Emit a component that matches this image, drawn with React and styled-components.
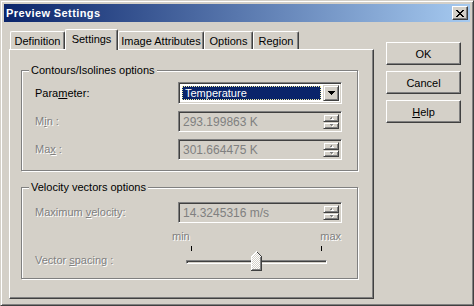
import React from 'react';
import styled, { createGlobalStyle } from 'styled-components';

const face = '#d4d0c8';
const shadow = '#808080';
const dark = '#404040';

const GlobalStyle = createGlobalStyle`
  html, body {
    margin: 0;
    padding: 0;
    background: ${face};
  }
  body {
    font-family: "Liberation Sans", Arial, sans-serif;
    font-size: 11px;
  }
  * {
    box-sizing: border-box;
  }
`;

const Window = styled.div`
  width: 474px;
  height: 306px;
  display: flex;
  flex-direction: column;
  padding: 3px;
  background: ${face};
  border: 1px solid;
  border-color: ${face} ${dark} ${dark} ${face};
  box-shadow: inset 1px 1px #fff, inset -1px -1px ${shadow};
`;

const TitleBar = styled.div`
  height: 18px;
  display: flex;
  align-items: center;
  justify-content: space-between;
  padding: 0 2px 0 2px;
  background: linear-gradient(to right, #0a246a, #a6caf0);
`;

const Title = styled.span`
  color: #fff;
  font-weight: bold;
  font-size: 11px;
  letter-spacing: 0.4px;
`;

const CloseButton = styled.div`
  width: 16px;
  height: 14px;
  display: flex;
  align-items: center;
  justify-content: center;
  background: ${face};
  border: 1px solid;
  border-color: #fff ${dark} ${dark} #fff;
  box-shadow: inset -1px -1px ${shadow};
`;

const Body = styled.div`
  flex: 1;
  display: flex;
  gap: 12px;
  padding: 7px 9px 3px 5px;
`;

const TabsColumn = styled.div`
  width: 365px;
  display: flex;
  flex-direction: column;
`;

const TabStrip = styled.div`
  height: 20px;
  display: flex;
  align-items: flex-end;
  padding-left: 1px;
`;

const Tab = styled.div`
  position: relative;
  width: ${(p) => p.$w}px;
  height: ${(p) => (p.$active ? 21 : 18)}px;
  margin-bottom: ${(p) => (p.$active ? -1 : 0)}px;
  z-index: ${(p) => (p.$active ? 1 : 0)};
  display: flex;
  align-items: center;
  justify-content: center;
  padding-bottom: ${(p) => (p.$active ? 2 : 0)}px;
  color: #000;
  background: ${face};
  border-top: 1px solid #fff;
  border-left: 1px solid #fff;
  border-right: 1px solid ${dark};
  border-radius: 2px 2px 0 0;
  box-shadow: inset -1px 0 ${shadow};
`;

const Panel = styled.div`
  flex: 1;
  display: flex;
  flex-direction: column;
  gap: 16px;
  padding: 20px 0 0 11px;
  border: 1px solid;
  border-color: #fff ${dark} ${dark} #fff;
  box-shadow: inset -1px -1px ${shadow};
`;

const GroupBox = styled.div`
  position: relative;
  width: 337px;
  height: ${(p) => p.$h}px;
  border: 1px solid ${shadow};
  box-shadow: inset 1px 1px #fff, 1px 1px #fff;
`;

const Legend = styled.span`
  position: absolute;
  top: -7px;
  left: 7px;
  padding: 0 2px;
  line-height: 13px;
  background: ${face};
  color: #000;
`;

const FormGrid = styled.div`
  display: grid;
  grid-template-columns: 1fr 164px;
  align-items: center;
  row-gap: 7px;
  padding: ${(p) => p.$top}px 15px 0 13px;
`;

const Label = styled.span`
  line-height: 13px;
  color: ${(p) => (p.$disabled ? shadow : '#000')};
  text-shadow: ${(p) => (p.$disabled ? '1px 1px #fff' : 'none')};
  align-self: ${(p) => p.$align || 'center'};
  margin-bottom: ${(p) => p.$mb || 0}px;
`;

const Key = styled.span`
  text-decoration: underline;
  text-underline-offset: 1px;
`;

const Sunken = styled.div`
  height: ${(p) => p.$h || 21}px;
  display: flex;
  align-items: center;
  background: ${(p) => (p.$white ? '#fff' : face)};
  border: 1px solid;
  border-color: ${shadow} #fff #fff ${shadow};
  box-shadow: inset 1px 1px ${dark}, inset -1px -1px ${face};
  padding: 2px 2px 2px 2px;
`;

const Selection = styled.div`
  flex: 1;
  align-self: stretch;
  margin: 1px 2px 1px 1px;
  padding-left: 2px;
  display: flex;
  align-items: center;
  background: #0a246a;
  color: #fff;
  border: 1px dotted #f4eea0;
`;

const ArrowButton = styled.div`
  width: 16px;
  align-self: stretch;
  display: flex;
  align-items: center;
  justify-content: center;
  background: ${face};
  border: 1px solid;
  border-color: ${face} ${dark} ${dark} ${face};
  box-shadow: inset 1px 1px #fff, inset -1px -1px ${shadow};
`;

const FieldText = styled.span`
  flex: 1;
  padding-left: 2px;
  color: ${shadow};
  font-size: 12px;
`;

const Spinner = styled.div`
  width: 16px;
  align-self: stretch;
  display: flex;
  flex-direction: column;
`;

const SpinHalf = styled.div`
  flex: 1;
  display: flex;
  align-items: center;
  justify-content: center;
  background: ${face};
  border: 1px solid;
  border-color: ${face} ${dark} ${dark} ${face};
  box-shadow: inset 1px 1px #fff, inset -1px -1px ${shadow};
`;

const Slider = styled.div`
  position: relative;
  width: 170px;
  margin-left: -6px;
  display: flex;
  flex-direction: column;
`;

const EndLabels = styled.div`
  display: flex;
  justify-content: space-between;
  padding-right: 1px;
  line-height: 13px;
  color: ${shadow};
  text-shadow: 1px 1px #fff;
`;

const Ticks = styled.div`
  display: flex;
  justify-content: space-between;
  margin-top: 3px;
  padding: 0 20px 0 19px;
`;

const Tick = styled.span`
  width: 1px;
  height: 5px;
  background: #000;
`;

const Track = styled.div`
  height: 4px;
  margin: 9px 15px 0 14px;
  border: 1px solid;
  border-color: ${shadow} #fff #fff ${shadow};
  box-shadow: inset 1px 1px ${dark};
  background: ${face};
`;

const Thumb = styled.svg`
  position: absolute;
  top: 21px;
`;

const ButtonColumn = styled.div`
  display: flex;
  flex-direction: column;
  gap: 6px;
  margin-top: 13px;
`;

const Button = styled.div`
  width: 75px;
  height: 23px;
  display: flex;
  align-items: center;
  justify-content: center;
  color: #000;
  background: ${face};
  border: 1px solid;
  border-color: #fff ${dark} ${dark} #fff;
  box-shadow: inset -1px -1px ${shadow}, inset 1px 1px ${face};
`;

function SpinArrow({ up }) {
  return (
    <svg width="5" height="4" viewBox="0 0 5 4" shapeRendering="crispEdges">
      <path d={up ? 'M2 1h1v1H2zM1 2h3v1H1z' : 'M1 1h3v1H1zM2 2h1v1H2z'} fill={shadow} />
      <path d={up ? 'M3 2h1v1H3zM4 3h1v1H4zM2 3h2v1H2z' : 'M4 2h1v1H4zM3 3h1v1H3z'} fill="#fff" />
    </svg>
  );
}

function SpinField({ value }) {
  return (
    <Sunken>
      <FieldText>{value}</FieldText>
      <Spinner>
        <SpinHalf><SpinArrow up /></SpinHalf>
        <SpinHalf><SpinArrow /></SpinHalf>
      </Spinner>
    </Sunken>
  );
}

function ThumbShape({ left }) {
  return (
    <Thumb width="11" height="20" viewBox="0 0 11 20" shapeRendering="crispEdges" style={{ left }}>
      <defs>
        <pattern id="dither" width="2" height="2" patternUnits="userSpaceOnUse">
          <rect width="2" height="2" fill={face} />
          <rect width="1" height="1" fill="#fff" />
          <rect x="1" y="1" width="1" height="1" fill="#fff" />
        </pattern>
      </defs>
      <path d="M0 5L5 0L10 5V19H0Z" fill="url(#dither)" />
      <path d="M0 5h1v15H0zM1 4h1v1H1zM2 3h1v1H2zM3 2h1v1H3zM4 1h1v1H4zM5 0h1v1H5z" fill="#fff" />
      <path d="M6 1h1v1H6zM7 2h1v1H7zM8 3h1v1H8zM9 4h1v1H9zM10 5h1v15H10zM0 19h11v1H0z" fill={dark} />
      <path d="M9 6h1v13H9zM1 18h8v1H1z" fill={shadow} />
    </Thumb>
  );
}

export default function App() {
  return (
    <>
      <GlobalStyle />
      <Window>
        <TitleBar>
          <Title>Preview Settings</Title>
          <CloseButton>
            <svg width="8" height="7" viewBox="0 0 8 7" shapeRendering="crispEdges">
              <path d="M0 0h2v1H0zM6 0h2v1H6zM1 1h2v1H1zM5 1h2v1H5zM2 2h4v1H2zM3 3h2v1H3zM2 4h4v1H2zM1 5h2v1H1zM5 5h2v1H5zM0 6h2v1H0zM6 6h2v1H6z" fill="#000" />
            </svg>
          </CloseButton>
        </TitleBar>
        <Body>
          <TabsColumn>
            <TabStrip>
              <Tab $w={55}>Definition</Tab>
              <Tab $w={53} $active>Settings</Tab>
              <Tab $w={86}>Image Attributes</Tab>
              <Tab $w={49}>Options</Tab>
              <Tab $w={46}>Region</Tab>
            </TabStrip>
            <Panel>
              <GroupBox $h={101}>
                <Legend>Contours/Isolines options</Legend>
                <FormGrid $top={11}>
                  <Label>Para<Key>m</Key>eter:</Label>
                  <Sunken $white $h={22}>
                    <Selection>Temperature</Selection>
                    <ArrowButton>
                      <svg width="7" height="4" viewBox="0 0 7 4" shapeRendering="crispEdges">
                        <path d="M0 0h7v1H0zM1 1h5v1H1zM2 2h3v1H2zM3 3h1v1H3z" fill="#000" />
                      </svg>
                    </ArrowButton>
                  </Sunken>
                  <Label $disabled>M<Key>i</Key>n :</Label>
                  <SpinField value="293.199863 K" />
                  <Label $disabled>Ma<Key>x</Key> :</Label>
                  <SpinField value="301.664475 K" />
                </FormGrid>
              </GroupBox>
              <GroupBox $h={92}>
                <Legend>Velocity vectors options</Legend>
                <FormGrid $top={14}>
                  <Label $disabled>Maximum <Key>v</Key>elocity:</Label>
                  <SpinField value="14.3245316 m/s" />
                  <Label $disabled $align="end" $mb={-3}>Vector <Key>s</Key>pacing :</Label>
                  <Slider>
                    <EndLabels>
                      <span>min</span>
                      <span>max</span>
                    </EndLabels>
                    <Ticks>
                      <Tick />
                      <Tick />
                    </Ticks>
                    <Track />
                    <ThumbShape left={79} />
                  </Slider>
                </FormGrid>
              </GroupBox>
            </Panel>
          </TabsColumn>
          <ButtonColumn>
            <Button>OK</Button>
            <Button>Cancel</Button>
            <Button><Key>H</Key>elp</Button>
          </ButtonColumn>
        </Body>
      </Window>
    </>
  );
}
